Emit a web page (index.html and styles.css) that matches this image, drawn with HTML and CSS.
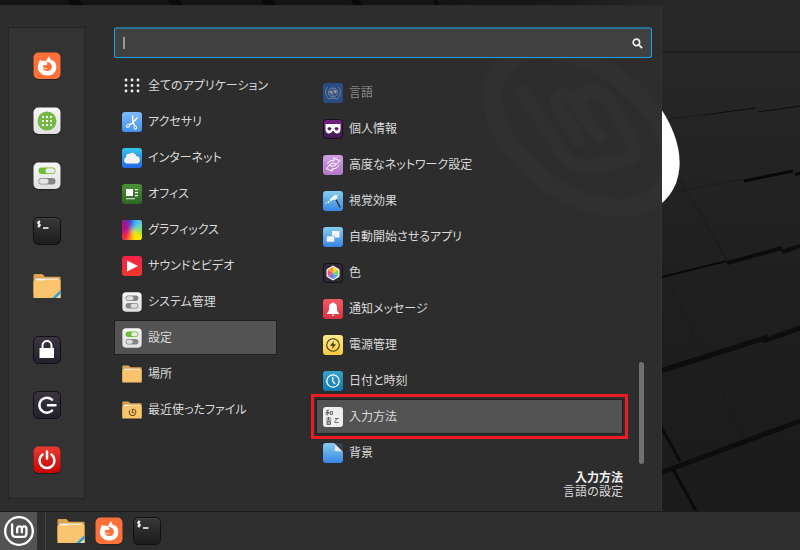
FILE: index.html
```html
<!DOCTYPE html>
<html lang="ja">
<head>
<meta charset="utf-8">
<title>デスクトップ</title>
<link rel="stylesheet" href="styles.css">
</head>
<body>
<svg class="defs" aria-hidden="true">
  <defs>
    <linearGradient id="g-light" x2="0" y2="1"><stop offset="0" stop-color="#f7f7f7"/><stop offset="1" stop-color="#e0e0e0"/></linearGradient>
    <linearGradient id="g-dark" x2="0" y2="1"><stop offset="0" stop-color="#383838"/><stop offset="1" stop-color="#1c1c1c"/></linearGradient>
    <linearGradient id="g-plum" x2="0" y2="1"><stop offset="0" stop-color="#3a3541"/><stop offset="1" stop-color="#241f2d"/></linearGradient>
    <linearGradient id="g-red" x2="0" y2="1"><stop offset="0" stop-color="#ea3a32"/><stop offset="1" stop-color="#c90303"/></linearGradient>
    <linearGradient id="g-blue" x2="0" y2="1"><stop offset="0" stop-color="#7fbafa"/><stop offset="1" stop-color="#4292ea"/></linearGradient>
    <linearGradient id="g-sky" x2="0" y2="1"><stop offset="0" stop-color="#38c6ee"/><stop offset="1" stop-color="#2468e6"/></linearGradient>
    <linearGradient id="g-aqua" x2="0" y2="1"><stop offset="0" stop-color="#83cdee"/><stop offset="1" stop-color="#3a86e4"/></linearGradient>
    <linearGradient id="g-green" x2="0" y2="1"><stop offset="0" stop-color="#4b9236"/><stop offset="1" stop-color="#2e6524"/></linearGradient>
    <linearGradient id="g-play" x2="0" y2="1"><stop offset="0" stop-color="#f21f48"/><stop offset="1" stop-color="#f0382c"/></linearGradient>
    <linearGradient id="g-violet" x2="0" y2="1"><stop offset="0" stop-color="#74217f"/><stop offset="1" stop-color="#3c1b4d"/></linearGradient>
    <linearGradient id="g-lilac" x2="0" y2="1"><stop offset="0" stop-color="#d09fe0"/><stop offset="1" stop-color="#b277c8"/></linearGradient>
    <linearGradient id="g-bell" x2="0" y2="1"><stop offset="0" stop-color="#f25a62"/><stop offset="1" stop-color="#d93243"/></linearGradient>
    <linearGradient id="g-yellow" x2="0" y2="1"><stop offset="0" stop-color="#ffe98a"/><stop offset="1" stop-color="#f9cc3d"/></linearGradient>
    <linearGradient id="g-clock" x2="0" y2="1"><stop offset="0" stop-color="#35a2ce"/><stop offset="1" stop-color="#1279ae"/></linearGradient>
    <clipPath id="c-round"><rect width="20" height="20" rx="3"/></clipPath>
    <clipPath id="c-hex"><path d="M10 3.800 15.300 6.900V13.100L10 16.200 4.700 13.100V6.900Z"/></clipPath>
    <filter id="f-soft"><feGaussianBlur stdDeviation="2"/></filter>
  </defs>

  <symbol id="firefox" viewBox="0 0 28 28">
    <rect x=".5" y="1" width="27" height="27" rx="5" fill="#222"/>
    <rect x=".5" y=".5" width="27" height="26.500" rx="5" fill="#ff7139"/>
    <path fill="#fff" d="M5.600 11.500C5.900 9.800 6.800 8.500 7.800 7.600L8.600 9.300C9.200 8.800 10 8.500 10.800 8.500C11 8.900 11.500 9.200 12.300 9.300C13.800 8.700 14.500 6.300 15.900 4.200C17 5.500 17.200 7.300 18.500 8.500L19.700 8.100C20 9 20.500 9.600 21.500 9.200C24.400 13.500 23.600 18.200 21 21C17.200 24.700 10.400 24.400 7 20.600C4.700 18 4.100 14.600 5.600 11.500Z"/>
    <path fill="#ff7139" d="M10 12.900C10.700 13.300 11.700 13.500 12.800 13.200L14.800 11.900C13.900 11.300 13.500 10.700 13.600 10C16 9.900 18.700 11.500 18.900 14.400C19.100 17.300 16.600 19.200 14 19C11.700 18.900 10 17.500 9.500 15.700C11 17 13 17.100 14.800 15.900H11.300C10 15.200 9.500 14.200 10 12.900Z"/>
  </symbol>
  <symbol id="apps" viewBox="0 0 28 28">
    <rect x=".5" y="1" width="27" height="27" rx="5" fill="#222"/>
    <rect x=".5" y=".5" width="27" height="26.500" rx="5" fill="url(#g-light)"/>
    <circle cx="14" cy="14" r="9.500" fill="#75b843"/>
    <path fill="#fff" d="M9 9h2v2H9zm4 0h2v2h-2zm4 0h2v2h-2zM9 13h2v2H9zm4 0h2v2h-2zm4 0h2v2h-2zM9 17h2v2H9zm4 0h2v2h-2zm4 0h2v2h-2z"/>
  </symbol>
  <symbol id="settings" viewBox="0 0 28 28">
    <rect x=".5" y="1" width="27" height="27" rx="5" fill="#222"/>
    <rect x=".5" y=".5" width="27" height="26.500" rx="5" fill="url(#g-light)"/>
    <rect x="5.500" y="5.500" width="17" height="6.500" rx="3.250" fill="#6ebe35"/>
    <rect x="12.500" y="6.300" width="9.300" height="5" rx="2.500" fill="#e9e9e9"/>
    <rect x="5.500" y="16" width="17" height="6.500" rx="3.250" fill="#858585"/>
    <rect x="6.200" y="16.800" width="9.300" height="5" rx="2.500" fill="#e4e4e4"/>
  </symbol>
  <symbol id="settings-small" viewBox="0 0 28 28">
    <rect x=".5" y=".5" width="27" height="27" rx="5" fill="url(#g-light)"/>
    <rect x="5" y="5" width="18" height="7.500" rx="3.700" fill="#6ebe35"/>
    <rect x="13" y="6" width="9" height="5.500" rx="2.700" fill="#e9e9e9"/>
    <rect x="5" y="15.500" width="18" height="7.500" rx="3.700" fill="#858585"/>
    <rect x="6" y="16.500" width="9" height="5.500" rx="2.700" fill="#dedede"/>
  </symbol>
  <symbol id="system" viewBox="0 0 28 28">
    <rect x=".5" y=".5" width="27" height="27" rx="5" fill="url(#g-light)"/>
    <rect x="5" y="5" width="18" height="7.500" rx="3.700" fill="#858585"/>
    <rect x="6" y="6" width="10" height="5.500" rx="2.700" fill="#dedede"/>
    <rect x="5" y="15.500" width="18" height="7.500" rx="3.700" fill="#858585"/>
    <rect x="12" y="16.500" width="10" height="5.500" rx="2.700" fill="#dedede"/>
  </symbol>
  <symbol id="terminal" viewBox="0 0 28 28">
    <rect x=".5" y=".5" width="27" height="27" rx="5" fill="url(#g-dark)" stroke="#101010"/>
    <path d="M2 5.500V5A3.500 3.500 0 0 1 5.500 1.500H22.500A3.500 3.500 0 0 1 26 5" fill="none" stroke="#494949" stroke-width=".8"/>
    <path d="M7.300 5C5.500 4 4 5.500 5.500 6.800L6.500 7.200C8 8 6.800 10 4.500 8.800M6 3.500V10.500M10 11H15.500" fill="none" stroke="#fff" stroke-width="1.300"/>
  </symbol>
  <symbol id="folder" viewBox="0 0 28 28">
    <path fill="#dca24d" d="M.5 23V3.200Q.5 2 1.700 2H8.800Q9.500 2 10.300 3L12 4.700H26.500Q27.500 4.700 27.500 5.800V23Z"/>
    <rect x="2.500" y="6.500" width="23" height="5" rx=".8" fill="#f4f1ee"/>
    <path fill="#f9c46d" d="M.5 9.500Q.5 8.500 1.500 8.500H9Q10.500 8.500 12 7.800H26.500Q27.500 7.800 27.500 8.800V25.500Q27.500 26 27 26H1Q.5 26 .5 25.500Z"/>
  </symbol>
  <symbol id="files" viewBox="0 0 28 28">
    <use href="#folder" width="28" height="28"/>
    <path fill="#fbdc9c" d="M27.500 21.500V26H22.500Z"/>
    <path fill="#30a0df" d="M27.500 18V21.800L23 26H19.300Z"/>
  </symbol>
  <symbol id="recent" viewBox="0 0 28 28">
    <use href="#folder" width="28" height="28"/>
    <path d="M11 14.500A4.600 4.600 0 1 0 15 12.500M14.500 12.500V17.500H17" fill="none" stroke="#6d501e" stroke-width="1.500"/>
  </symbol>
  <symbol id="lock" viewBox="0 0 28 28">
    <rect x=".5" y=".5" width="27" height="27" rx="5" fill="url(#g-plum)" stroke="#121015"/>
    <path d="M9.500 13V9.500C9.500 3.500 18.500 3.500 18.500 9.500V13" fill="none" stroke="#fff" stroke-width="2"/>
    <path fill="#fff" d="M6.500 12H21V22H6.500Z"/>
  </symbol>
  <symbol id="logout" viewBox="0 0 28 28">
    <rect x=".5" y=".5" width="27" height="27" rx="5" fill="url(#g-plum)" stroke="#121015"/>
    <path d="M19 8.700A7.500 7.500 0 1 0 19 19.700M15 14.300H22.500" fill="none" stroke="#fff" stroke-width="2.500" stroke-linecap="round"/>
  </symbol>
  <symbol id="power" viewBox="0 0 28 28">
    <rect x=".5" y="1" width="27" height="27" rx="5" fill="#1d1d1d"/>
    <rect x=".5" y=".5" width="27" height="26.500" rx="5" fill="url(#g-red)"/>
    <path d="M9.500 8.500A7.500 7.500 0 1 0 18.500 8.500M14 5.500V12.500" fill="none" stroke="#fff" stroke-width="2.500" stroke-linecap="round"/>
  </symbol>
  <symbol id="mint" viewBox="0 0 32 32">
    <circle cx="16" cy="16" r="13" fill="none" stroke="#fff" stroke-width="2.200"/>
    <path d="M9.500 9V18Q9.500 21.500 13.500 21.500H19.500Q23 21.500 23 18V14Q23 11.700 20.900 11.700Q18.700 11.700 18.700 14V18M18.700 14Q18.700 11.700 16.500 11.700Q14.300 11.700 14.300 14V18" fill="none" stroke="#fff" stroke-width="2.200"/>
  </symbol>

  <symbol id="grid" viewBox="0 0 20 20">
    <path fill="none" stroke="#eee" stroke-width="2.800" stroke-linecap="round" d="M4 4h.01M10 4h.01M16 4h.01M4 9.500h.01M10 9.500h.01M16 9.500h.01M4 15h.01M10 15h.01M16 15h.01"/>
  </symbol>
  <symbol id="scissors" viewBox="0 0 20 20">
    <rect width="20" height="20" rx="3" fill="url(#g-blue)"/>
    <path d="M10.500 3.500 11 10.500 13 14M15.500 5.500 10 11.500 7 13" fill="none" stroke="#fff" stroke-width="1.400"/>
    <ellipse cx="6" cy="13.800" rx="1.800" ry="1.300" fill="none" stroke="#fff" transform="rotate(-25 6 13.800)"/>
    <ellipse cx="13.300" cy="15.500" rx="1.300" ry="1.800" fill="none" stroke="#fff" transform="rotate(-15 13.300 15.500)"/>
  </symbol>
  <symbol id="cloud" viewBox="0 0 20 20">
    <rect width="20" height="20" rx="3" fill="url(#g-sky)"/>
    <path fill="#f4f4f4" d="M5 15.500A3.300 3.300 0 0 1 4 9.200A3.300 3.300 0 0 1 7.400 5.800A4.400 4.400 0 0 1 14.300 8A3.900 3.900 0 0 1 15.500 15.500Z"/>
  </symbol>
  <symbol id="office" viewBox="0 0 20 20">
    <rect width="20" height="20" rx="3" fill="url(#g-green)"/>
    <path fill="#fff" d="M4 5h7v7H4zM13 5h3v1.300h-3zM13 8h3v1.300h-3zM13 11h3v1.300h-3z"/>
    <path fill="#c0d1bd" d="M4 14h9v1.300H4z"/>
  </symbol>
  <symbol id="graphics" viewBox="0 0 20 20">
    <g clip-path="url(#c-round)"><rect width="20" height="20" fill="#a6b94a"/>
    <g filter="url(#f-soft)">
      <path fill="#7715a0" d="M10 10-4-4H6Z"/><path fill="#3340dc" d="M10 10 5-4H14Z"/><path fill="#4ac6ef" d="M10 10 13-4H24V4Z"/><path fill="#8ce27a" d="M10 10 24 3V11Z"/><path fill="#7de000" d="M10 10 24 10V18Z"/><path fill="#ffec00" d="M10 10 24 17V24H10Z"/><path fill="#ff9b13" d="M10 10 12 24H4Z"/><path fill="#ef233d" d="M10 10 5 24H-4V14Z"/><path fill="#b30a8d" d="M10 10-4 15V-4Z"/>
    </g></g>
  </symbol>
  <symbol id="video" viewBox="0 0 20 20">
    <rect width="20" height="20" rx="3" fill="url(#g-play)"/><path fill="#fff" d="M5 4.500 16 10 5 15.500Z"/>
  </symbol>
  <symbol id="language" viewBox="0 0 20 20">
    <rect width="20" height="20" rx="3" fill="#2867c8"/>
    <circle cx="10" cy="9.500" r="4.500" fill="none" stroke="#dbe8fb" stroke-width=".8"/>
    <path d="M5.500 9.500H14.500M10 5V14" fill="none" stroke="#c5d8f6" stroke-width=".5"/>
    <path fill="#dbe8fb" d="M6.500 8 9.500 7.500 9 10 10.500 13 7.500 10.500ZM11 7H13.500L12.800 11 11 9.500Z"/>
    <path d="M4.500 4C1.500 8 2 13 6 16M15.500 4C18.500 8 18 13 14 16M6 16 10 15 14 16" fill="none" stroke="#b4cbf0" stroke-width=".9"/>
  </symbol>
  <symbol id="privacy" viewBox="0 0 20 20">
    <rect x=".5" y=".5" width="19" height="19" rx="3" fill="url(#g-violet)" stroke="#1c0b20"/>
    <path fill="#fff" fill-rule="evenodd" d="M2.500 5H17.500V10.500C17.500 15.500 12 15.500 10.500 12H9.500C8 15.500 2.500 15.500 2.500 10.500ZM4.500 9.500C5 12 8 12 8.500 9.500C8 7.700 5 7.700 4.500 9.500ZM11.500 9.500C12 12 15 12 15.500 9.500C15 7.700 12 7.700 11.500 9.500Z"/>
  </symbol>
  <symbol id="network" viewBox="0 0 20 20">
    <rect width="20" height="20" rx="3" fill="url(#g-lilac)"/>
    <path d="M4 8.500Q6.500 5 11 5.300L10.700 3 16.700 5.700 12.700 10.200 12 8.200Q8 7.500 6.500 9.800M16 10.500Q13.500 14.300 9 14L9.300 16.300 3.300 13.600 7.300 9.500 8 11.300Q12 11.500 13.500 9.500" fill="none" stroke="#fff" stroke-width="1"/>
  </symbol>
  <symbol id="effects" viewBox="0 0 20 20">
    <rect width="20" height="20" rx="3" fill="url(#g-aqua)"/>
    <path d="M12.500 7.500 17 16.500" stroke="#333" stroke-width="1.500"/>
    <path fill="#fff" opacity=".9" d="M10 5.500Q12 2.500 14.500 4.500L14 8Q12 9.500 10.500 8.500L7.500 10.500Q6 9.500 7 8Z"/><circle cx="5.500" cy="11" r="1" fill="#fff"/><circle cx="3" cy="12" r=".7" fill="#fff"/>
  </symbol>
  <symbol id="startup" viewBox="0 0 20 20">
    <rect width="20" height="20" rx="3" fill="url(#g-aqua)"/><path fill="#f4f4f4" d="M9 4h7.500v6.500H9z"/><path fill="#f4f4f4" stroke="#5da9e7" stroke-width=".6" d="M3.500 9h8v6h-8z"/>
  </symbol>
  <symbol id="color" viewBox="0 0 20 20">
    <rect x=".5" y=".5" width="19" height="19" rx="3" fill="#2e2936" stroke="#121015"/>
    <path fill="#fff" stroke="#fff" stroke-linejoin="round" d="M10 3 16 6.500V13.500L10 17 4 13.500V6.500Z"/>
    <g clip-path="url(#c-hex)"><path fill="#f2943a" d="M10 10V2L3 6Z"/><path fill="#f7da37" d="M10 10V2L17 6Z"/><path fill="#7bd750" d="M10 10 17 6V14Z"/><path fill="#4eafe0" d="M10 10 17 14 10 18Z"/><path fill="#9a67dc" d="M10 10V18L3 14Z"/><path fill="#ed5474" d="M10 10 3 14V6Z"/></g>
  </symbol>
  <symbol id="notify" viewBox="0 0 20 20">
    <rect width="20" height="20" rx="3" fill="url(#g-bell)"/>
    <path fill="#fff" d="M9 4Q10 2.500 11 4C13.500 4.500 14 6.500 14 9C14 12 14.500 13 16 14V15H4V14C5.500 13 6 12 6 9C6 6.500 6.500 4.500 9 4ZM8.500 15.700H11.500Q11 17 10 17T8.500 15.700Z"/>
  </symbol>
  <symbol id="energy" viewBox="0 0 20 20">
    <rect width="20" height="20" rx="3" fill="url(#g-yellow)"/>
    <circle cx="10" cy="10" r="6.300" fill="none" stroke="#3c3420" stroke-width="1.100"/><path fill="#3c3420" d="M11 6 7 10.800H9.700L9 14 13 9.200H10.300Z"/>
  </symbol>
  <symbol id="clock" viewBox="0 0 20 20">
    <rect width="20" height="20" rx="3" fill="url(#g-clock)"/>
    <circle cx="10" cy="10" r="6.200" fill="none" stroke="#fff" stroke-width="1.300"/><path d="M9.700 6V10L12 13" fill="none" stroke="#fff" stroke-width="1.300"/>
  </symbol>
  <symbol id="input" viewBox="0 0 20 20">
    <rect width="20" height="20" rx="3" fill="#eee"/>
    <path d="M3 4 6 3M2.500 5.500H6.500M4.700 3.500V8.500M4.500 5.500 2.500 8M5 5.500 6.500 7M7.500 4.500H9.500V7.500H7.500ZM3.500 11H8M5.500 10V13M3 13H8.500M4 14.500H7.500V17.500H4ZM4 16H7.500M12 11.500H16M12.500 11.500C15 13 11 14 12 15.500H15.500" fill="none" stroke="#4b4b4b" stroke-width=".8"/>
  </symbol>
  <symbol id="wallpaper" viewBox="0 0 20 20">
    <path fill="url(#g-aqua)" d="M3 0H11L20 9V17Q20 20 17 20H3Q0 20 0 17V3Q0 0 3 0Z"/>
    <path fill="#38414d" d="M11 0H17Q20 0 20 3V9Z"/><path fill="#e8e8e6" d="M11 0C13 3 12 5 11.500 7.500C14 9 17 7.500 20 9Z"/>
  </symbol>
</svg>

<div class="desktop">
  <svg class="scene" viewBox="0 0 800 550" preserveAspectRatio="xMaxYMin slice" aria-hidden="true">
    <defs>
      <linearGradient id="g-wall" x2="0" y2="1"><stop offset="0" stop-color="#292929"/><stop offset=".5" stop-color="#1f1f1f"/><stop offset="1" stop-color="#1a1a1a"/></linearGradient>
      <linearGradient id="g-top"><stop offset="0" stop-color="#131313"/><stop offset=".65" stop-color="#141414"/><stop offset=".85" stop-color="#191919"/><stop offset="1" stop-color="#272727"/></linearGradient>
    </defs>
    <rect width="800" height="550" fill="url(#g-wall)"/>
    <path fill="url(#g-top)" d="M0 0H662V6H0Z"/>
    <path fill="#090909" d="M68 0H78L84 6H72ZM168 0H179L184 6H172ZM262 0H272L277 6H265ZM351 0H359L363 6H354ZM433 0H437L440 6H436Z"/>
    <g fill="none" stroke="#121212">
      <path d="M661 120 703 115M660 52H800M675 192 743 179M680 180 710 230 727 260M662 268 722 393 778 511" stroke="#1a1a1a"/>
      <path d="M704 115 755 108M758 112 800 106" stroke="#0c0c0c"/>
      <path d="M744 181 793 171M795 175 800 173" stroke="#080808" stroke-width="3"/>
      <path d="M662 277 727 261" stroke="#0a0a0a" stroke-width="2"/>
      <path d="M727 263 782 248M782 252 800 246" stroke="#0c0c0c" stroke-width="4"/>
      <path d="M660 371 768 337M763 341 800 328M660 473 800 421" stroke="#0d0d0d" stroke-width="5"/>
      <path d="M660 425 680 461M673 469 696 511" stroke="#0a0a0a" stroke-width="3"/>
    </g>
    <g fill="none" stroke="#fff">
      <ellipse cx="581.500" cy="129" rx="101" ry="63" stroke-width="18" transform="rotate(37 581.500 129)"/>
      <path d="M520 88 560 150Q573 169 592 166L623 161Q641 156 631 139L610 102Q598 86 584 93Q572 99 581 112L604 142M582 109Q571 92 562 95Q552 100 562 113L581 145" stroke-width="13"/>
    </g>
  </svg>

  <main class="menu">
    <nav class="favorites" aria-label="お気に入り">
      <button class="launcher" aria-label="Firefox"><svg><use href="#firefox"/></svg></button>
      <button class="launcher" aria-label="ソフトウェアの管理"><svg><use href="#apps"/></svg></button>
      <button class="launcher" aria-label="システム設定"><svg><use href="#settings"/></svg></button>
      <button class="launcher" aria-label="端末"><svg><use href="#terminal"/></svg></button>
      <button class="launcher" aria-label="ファイル"><svg><use href="#files"/></svg></button>
      <button class="launcher session" aria-label="画面をロック"><svg><use href="#lock"/></svg></button>
      <button class="launcher" aria-label="ログアウト"><svg><use href="#logout"/></svg></button>
      <button class="launcher" aria-label="シャットダウン"><svg><use href="#power"/></svg></button>
    </nav>

    <section class="content">
      <label class="search">
        <input type="text" aria-label="検索">
        <svg viewBox="0 0 12 12" aria-hidden="true"><circle cx="4.800" cy="4.800" r="3.500" fill="none" stroke="#eee" stroke-width="1.800"/><path d="M7.500 7.500 11 11" stroke="#eee" stroke-width="2"/></svg>
      </label>

      <div class="browser">
        <div class="list">
          <button class="item"><svg><use href="#grid"/></svg>全てのアプリケーション</button>
          <button class="item"><svg><use href="#scissors"/></svg>アクセサリ</button>
          <button class="item"><svg><use href="#cloud"/></svg>インターネット</button>
          <button class="item"><svg><use href="#office"/></svg>オフィス</button>
          <button class="item"><svg><use href="#graphics"/></svg>グラフィックス</button>
          <button class="item"><svg><use href="#video"/></svg>サウンドとビデオ</button>
          <button class="item"><svg><use href="#system"/></svg>システム管理</button>
          <button class="item selected"><svg><use href="#settings-small"/></svg>設定</button>
          <button class="item"><svg><use href="#folder"/></svg>場所</button>
          <button class="item"><svg><use href="#recent"/></svg>最近使ったファイル</button>
        </div>
        <div class="list applications">
          <button class="item faded"><svg><use href="#language"/></svg>言語</button>
          <button class="item"><svg><use href="#privacy"/></svg>個人情報</button>
          <button class="item"><svg><use href="#network"/></svg>高度なネットワーク設定</button>
          <button class="item"><svg><use href="#effects"/></svg>視覚効果</button>
          <button class="item"><svg><use href="#startup"/></svg>自動開始させるアプリ</button>
          <button class="item"><svg><use href="#color"/></svg>色</button>
          <button class="item"><svg><use href="#notify"/></svg>通知メッセージ</button>
          <button class="item"><svg><use href="#energy"/></svg>電源管理</button>
          <button class="item"><svg><use href="#clock"/></svg>日付と時刻</button>
          <button class="item selected marked"><svg><use href="#input"/></svg>入力方法</button>
          <button class="item"><svg><use href="#wallpaper"/></svg>背景</button>
        </div>
        <div class="track"><div class="thumb"></div></div>
      </div>

      <footer class="description"><strong>入力方法</strong><span>言語の設定</span></footer>
    </section>
  </main>

  <nav class="panel" aria-label="パネル">
    <button class="start" aria-label="メニュー"><svg><use href="#mint"/></svg></button>
    <div class="tasks">
      <button class="launcher" aria-label="ファイル"><svg><use href="#files"/></svg></button>
      <button class="launcher" aria-label="Firefox"><svg><use href="#firefox"/></svg></button>
      <button class="launcher" aria-label="端末"><svg><use href="#terminal"/></svg></button>
    </div>
  </nav>
</div>
</body>
</html>
```
FILE: styles.css
```css
* {
  box-sizing: border-box;
}

body {
  margin: 0;
  background: #1c1c1c;
  color: #dadada;
  font-family: "Liberation Sans", "Noto Sans CJK JP", sans-serif;
  font-size: 12px;
  line-height: 14px;
}

button {
  margin: 0;
  padding: 0;
  border: 0;
  background: none;
  color: inherit;
  font: inherit;
}

svg {
  display: block;
}

.defs {
  position: absolute;
  width: 0;
  height: 0;
}

.desktop {
  position: relative;
  isolation: isolate;
  display: flex;
  flex-direction: column;
  min-height: 100vh;
  padding-top: 5px;
}

.scene {
  position: absolute;
  inset: 0;
  z-index: -1;
  width: 100%;
  height: 100%;
}

.menu {
  flex: 1;
  display: flex;
  gap: 29px;
  margin-right: 138px;
  padding: 21px 9px 12px 8px;
  border-top: 1px solid #292929;
  border-right: 1px solid #353535;
  background: rgba(46, 46, 46, 0.99);
}

.favorites {
  display: flex;
  flex-direction: column;
  align-items: center;
  gap: 27px;
  width: 77px;
  padding-top: 24px;
  border: 1px solid #252525;
  background: #333333;
}

.launcher svg {
  width: 28px;
  height: 28px;
}

.session {
  margin-top: 9px;
}

.content {
  flex: 1;
  display: flex;
  flex-direction: column;
}

.search {
  display: flex;
  align-items: center;
  height: 31px;
  padding: 0 8px;
  border: 1px solid #1ba4e8;
  border-top: 2px solid #287195;
  border-radius: 3px;
  background: #404040;
}

.search input {
  flex: 1;
  min-width: 0;
  height: 24px;
  padding: 0 8px;
  border: 0;
  outline: 0;
  background: linear-gradient(#999999, #999999) 0 50% / 2px 12px no-repeat;
  color: inherit;
  font: inherit;
}

.search svg {
  width: 11px;
  height: 11px;
}

.browser {
  flex: 1;
  display: grid;
  grid-template-columns: 163px 1fr 5px;
  padding: 10px 8px 0 0;
}

.list {
  display: flex;
  flex-direction: column;
  gap: 1px;
}

.applications {
  margin: 7px 16px 0 39px;
}

.item {
  display: flex;
  align-items: center;
  gap: 6px;
  height: 35px;
  padding: 0 7px;
  border: 1px solid transparent;
  line-height: 16px;
  text-align: left;
  white-space: nowrap;
  font-feature-settings: "palt";
}

.applications .item {
  padding: 0 6px;
}

.item svg {
  flex: none;
  width: 20px;
  height: 20px;
}

.selected {
  border-color: #202020;
  background: #535353;
}

.marked {
  outline: 3px solid #ed1c24;
  outline-offset: 2px;
}

.faded {
  opacity: 0.55;
}

.track {
  display: flex;
  align-items: flex-end;
  padding-bottom: 7px;
}

.thumb {
  width: 5px;
  height: 102px;
  border-radius: 3px;
  background: #707070;
}

.description {
  display: flex;
  flex-direction: column;
  align-items: flex-end;
  padding-right: 29px;
}

.description strong {
  color: #f0f0f0;
}

.panel {
  display: flex;
  height: 39px;
  border-top: 1px solid #1b1b1b;
  background: #2e2e2e;
}

.start {
  display: grid;
  place-items: center;
  width: 37px;
  background: #535353;
}

.start svg {
  width: 34px;
  height: 34px;
}

.tasks {
  display: flex;
  align-items: center;
  gap: 10px;
  margin-left: 8px;
  padding-left: 11px;
  border-left: 1px solid #444444;
}
```
